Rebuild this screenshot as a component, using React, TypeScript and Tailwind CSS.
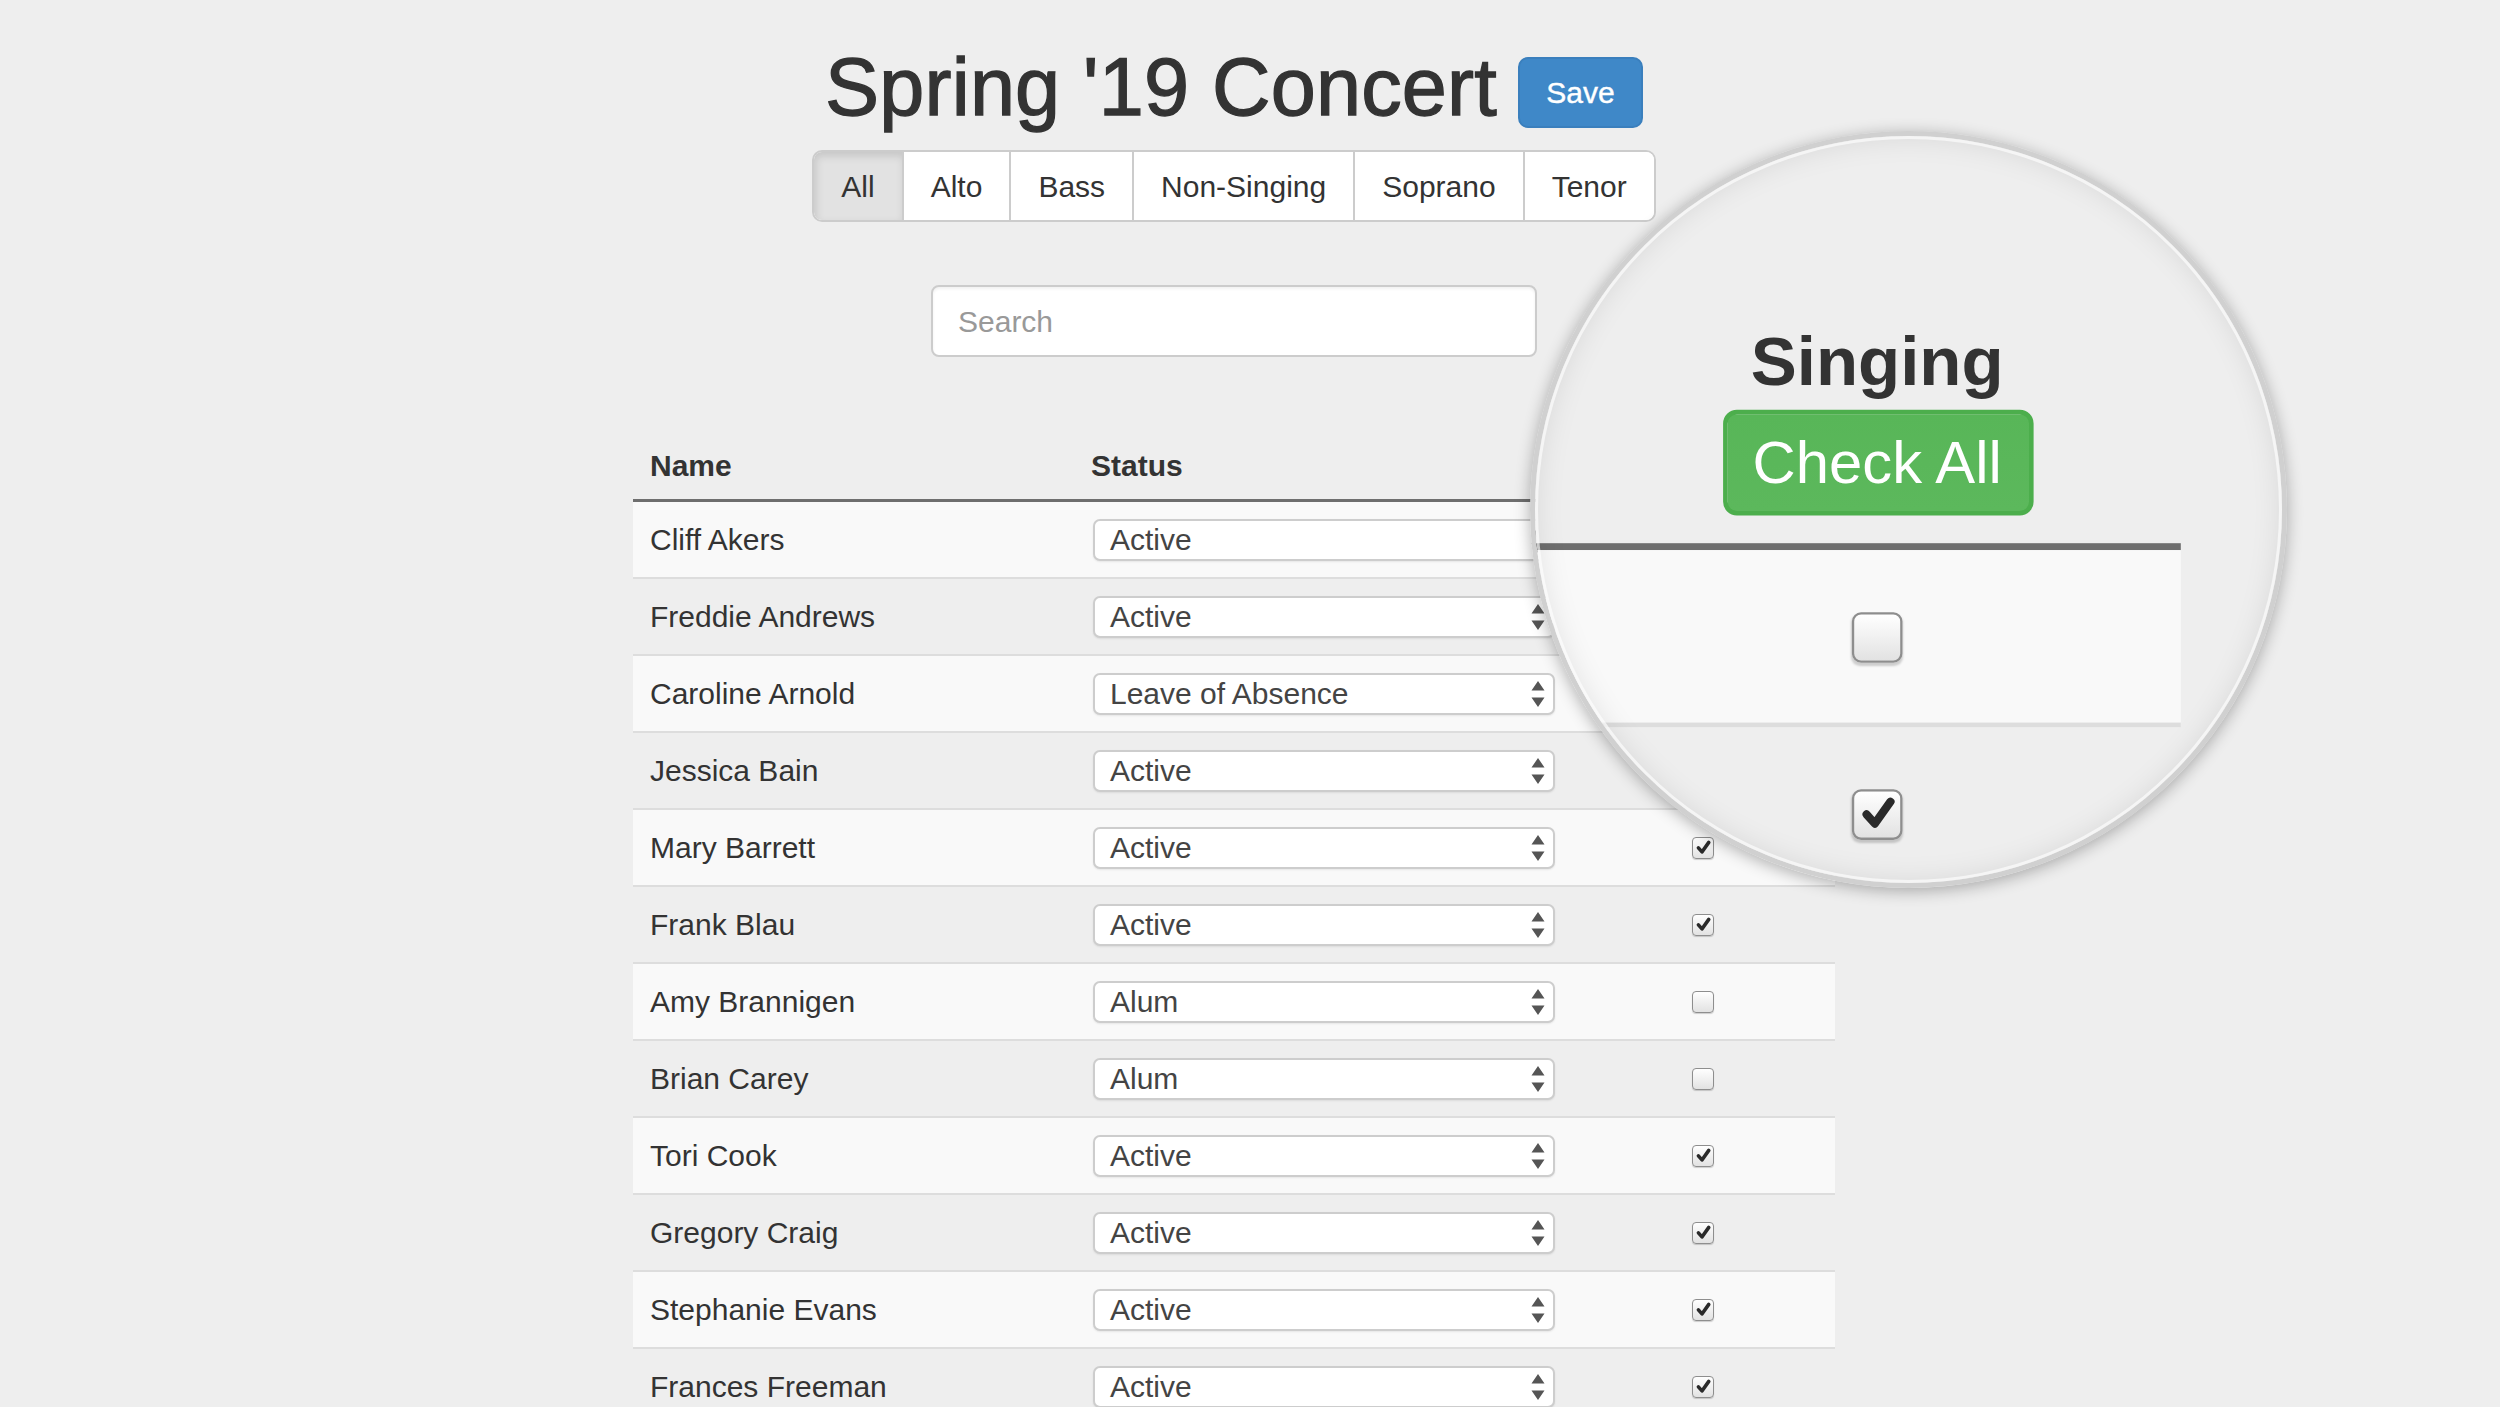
import { Fragment } from 'react';

type Member = { name: string; status: string; singing: boolean };

const members: Member[] = [
    { name: 'Cliff Akers', status: 'Active', singing: false },
    { name: 'Freddie Andrews', status: 'Active', singing: true },
    { name: 'Caroline Arnold', status: 'Leave of Absence', singing: false },
    { name: 'Jessica Bain', status: 'Active', singing: true },
    { name: 'Mary Barrett', status: 'Active', singing: true },
    { name: 'Frank Blau', status: 'Active', singing: true },
    { name: 'Amy Brannigen', status: 'Alum', singing: false },
    { name: 'Brian Carey', status: 'Alum', singing: false },
    { name: 'Tori Cook', status: 'Active', singing: true },
    { name: 'Gregory Craig', status: 'Active', singing: true },
    { name: 'Stephanie Evans', status: 'Active', singing: true },
    { name: 'Frances Freeman', status: 'Active', singing: true },
];

const parts = ['All', 'Alto', 'Bass', 'Non-Singing', 'Soprano', 'Tenor'];

const Checkbox = ({ checked }: { checked: boolean }) => (
    <span className="w-[22px] h-[22px] rounded-[4px] border-[1.5px] border-[#8e8e8e] bg-linear-to-b from-white to-[#e2e2e2] shadow-[0_1px_1px_rgba(0,0,0,0.18)] flex items-center justify-center">
        {checked && (
            <svg viewBox="0 0 20 20" className="w-[17px] h-[17px]">
                <path d="M4 10.5 L8.2 15.2 L16.2 4" fill="none" stroke="#2a2a2a" strokeWidth="4.2" strokeLinecap="round" strokeLinejoin="round" />
            </svg>
        )}
    </span>
);

const StatusSelect = ({ value }: { value: string }) => (
    <div className="w-[462px] h-[42px] rounded-[7px] border-2 border-[#cdcdcd] bg-white shadow-[0_1px_2px_rgba(0,0,0,0.08)] flex items-center justify-between pl-[15px] pr-[8px]">
        <span className="text-[30px] leading-none text-[#444]">{value}</span>
        <svg width="14" height="26" viewBox="0 0 14 26">
            <path d="M7 0 L13.5 9.5 L0.5 9.5 Z M0.5 16.5 L13.5 16.5 L7 26 Z" fill="#555" />
        </svg>
    </div>
);

// the page itself, drawn once normally and once under the lens
const Sheet = () => (
    <div className="w-[2500px] h-[1407px] bg-[#eeeeee] overflow-hidden font-['Liberation_Sans',Arial,sans-serif] text-[#333]">
        <div className="ml-[633px] w-[1202px]">
            {/* Title */}
            <div className="flex justify-center items-start gap-[21px]">
                <h1 className="mt-[47px] text-[81px] leading-[81px] text-[#333] tracking-[0.2px] [-webkit-text-stroke:1.3px_#333]">Spring '19 Concert</h1>
                <button className="mt-[57px] w-[125px] h-[71px] rounded-[10px] bg-[#3f88c8] border-2 border-[#3a7fbd] text-white text-[30px] [-webkit-text-stroke:0.4px_#fff]">
                    Save
                </button>
            </div>

            {/* Part filter */}
            <div className="mt-[22px] flex justify-center">
                <div className="flex h-[72px] rounded-[10px] border-2 border-[#cccccc] overflow-hidden divide-x-2 divide-[#cccccc] bg-white">
                    {parts.map((p, i) => (
                        <div
                            key={p}
                            className={
                                i === 0
                                    ? 'px-[27px] flex items-center text-[30px] bg-[#e2e2e2] shadow-[inset_2px_4px_8px_rgba(0,0,0,0.13)]'
                                    : 'px-[27px] flex items-center text-[30px] bg-white'
                            }
                        >
                            {p}
                        </div>
                    ))}
                </div>
            </div>

            {/* Search */}
            <div className="mt-[63px] flex justify-center">
                <div className="w-[606px] h-[72px] rounded-[8px] border-2 border-[#cccccc] bg-white shadow-[inset_0_2px_3px_rgba(0,0,0,0.06)] flex items-center pl-[25px]">
                    <span className="text-[30px] text-[#999]">Search</span>
                </div>
            </div>

            {/* Table */}
            <div className="mt-[21px]">
                <div className="grid grid-cols-[441px_497px_264px] h-[124px] border-b-[3px] border-[#6e6e6e] items-end pb-[12px] font-bold text-[30px] leading-[43px]">
                    <div className="px-[17px]">Name</div>
                    <div className="px-[17px]">Status</div>
                    <div className="flex flex-col items-center">
                        <span>Singing</span>
                        <button className="w-[135px] h-[46px] rounded-[6px] bg-linear-to-b from-[#58b658] to-[#5cb85c] border-2 border-[#4cae4c] text-white font-normal text-[26px] leading-none">
                            Check All
                        </button>
                    </div>
                </div>
                {members.map((m, i) => (
                    <Fragment key={m.name}>
                        <div
                            className={
                                i % 2 === 0
                                    ? 'grid grid-cols-[441px_497px_264px] h-[77px] border-b-2 border-[#dddddd] items-center bg-[#f9f9f9]'
                                    : 'grid grid-cols-[441px_497px_264px] h-[77px] border-b-2 border-[#dddddd] items-center'
                            }
                        >
                            <div className="px-[17px] text-[30px]">{m.name}</div>
                            <div className="pl-[19px]">
                                <StatusSelect value={m.status} />
                            </div>
                            <div className="flex justify-center">
                                <Checkbox checked={m.singing} />
                            </div>
                        </div>
                    </Fragment>
                ))}
            </div>
        </div>
    </div>
);

export default function App() {
    return (
        <div className="relative w-[2500px] h-[1407px] overflow-hidden">
            <Sheet />

            {/* Magnifier lens */}
            <div className="absolute left-[1530px] top-[131px] w-[757px] h-[757px] rounded-full border-[5px] border-[#d0d0d0] overflow-hidden shadow-[0_3px_16px_rgba(0,0,0,0.3)]">
                <div className="absolute left-[-1535px] top-[-136px] origin-[1569px_465px] scale-[2.3]">
                    <Sheet />
                </div>
                <div className="absolute inset-0 rounded-full pointer-events-none shadow-[inset_0_0_0_3px_rgba(255,255,255,0.65),inset_0_0_30px_rgba(0,0,0,0.10)]" />
            </div>
        </div>
    );
}
